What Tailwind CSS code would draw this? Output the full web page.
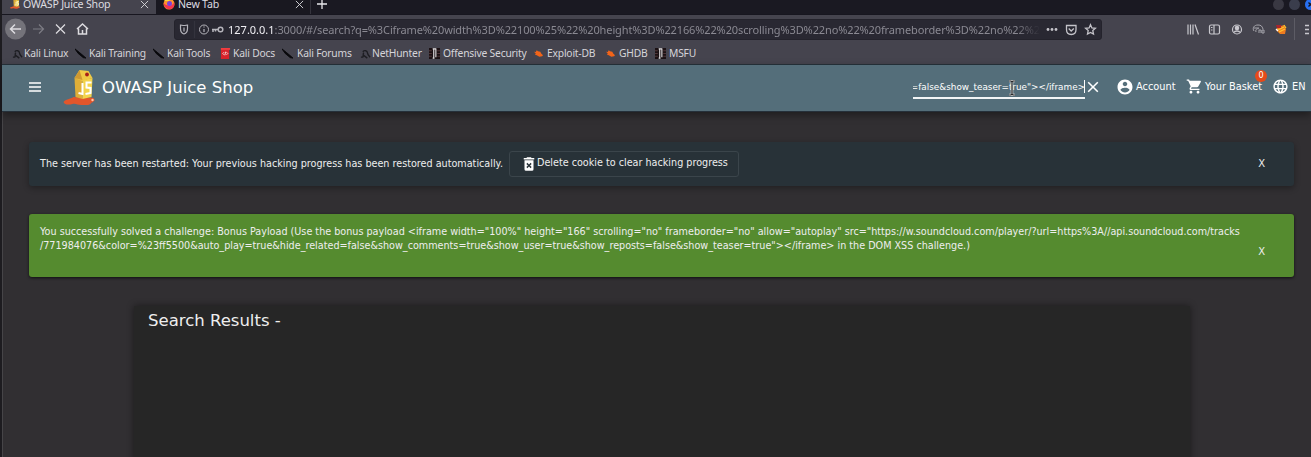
<!DOCTYPE html>
<html lang="en">
<head>
<meta charset="utf-8">
<title>OWASP Juice Shop</title>
<script src="https://cdn.jsdelivr.net/npm/@tailwindcss/browser@4"></script>
</head>
<body class="h-[457px] w-[1311px] overflow-hidden bg-[#312f32] font-['DejaVu_Sans',sans-serif] text-[#eeeeee]">
<svg class="hidden">
  <symbol id="juice" viewBox="0 0 32 36">
    <path d="M0 33c2-3 7-3 10-5l13 1c4-1 8-1 8 2 0 2-3 2-4 4-3 2-6 1-9 1-4 0-6-2-9-1-4 1-8 1-9-2z" fill="#e2562b"/>
    <path d="M11 9l8 2v19l-7-2z" fill="#dfae38"/><path d="M19 11l10-2-1 19-9 2z" fill="#f3d34b"/>
    <path d="M11 9l5-8 9 1 4 7-10 3z" fill="#f0ca45"/><path d="M11 9l5-8 3 10z" fill="#cf9931"/>
    <circle cx="23.500" cy="5.500" r="1.900" fill="#a81e16"/>
    <path d="M19 14v11l-4-1M28 13.500h-5v5l4 .5v5l-5 1" fill="none" stroke="#fff" stroke-width="2"/>
    <circle cx="29" cy="31" r="1.200" fill="#ffc9ae"/>
  </symbol>
  <symbol id="knife" viewBox="0 0 12 12"><path d="M0 1l5 4 7 6-3-.5L3.500 6z" fill="#09090c" stroke="#09090c" stroke-width="1"/></symbol>
  <symbol id="dragon" viewBox="0 0 12 12"><path d="M3 4c2-2 5-1 5 1 0 2 1 3 3 5M4 5c-1 2 0 4-1 5H1M4 8l4 3" fill="none" stroke="#1d1d22" stroke-width="1.500"/></symbol>
  <symbol id="bug" viewBox="0 0 10 8"><path d="M0 2l2 .2L3 .5l1.500 1L7 2l1 2 2 2-1 1-3 .7L3 6 1 5l1-1z" fill="#f26419"/></symbol>
  <symbol id="offsec" viewBox="0 0 12 12"><path d="M0 0h12v12H0z" fill="#1b1114"/><path d="M0 3h3M0 6h3M9 3h3M9 6h3M0 9h3M9 9h3" stroke="#55393c"/><path d="M4 1h4M5.200 1v10M7.500 1v9M4 11h2" fill="none" stroke="#e8e6e8" stroke-width="1.200"/></symbol>
  <symbol id="x" viewBox="0 0 10 10"><path d="M1 1l8 8M9 1L1 9" fill="none" stroke="currentColor"/></symbol>
</svg>
<div class="flex h-[457px] overflow-hidden">
  <div class="w-[2px] bg-[#1d1c20]"></div>
  <div class="flex w-[1309px] flex-col">
    <!-- Tab strip -->
    <div class="flex h-[14px] shrink-0 overflow-hidden bg-[#1a1922] font-['Noto_Sans',sans-serif] text-[10.600px] tracking-[-0.200px] text-[#dddce0]">
      <div class="flex h-[14px] w-[154px] bg-[#45444e] pl-[8px]">
        <svg class="mt-[-3px] h-[12px] w-[10px] shrink-0"><use href="#juice"/></svg>
        <span class="mt-[-4px] ml-[3px] w-[115px] leading-[16px] whitespace-nowrap">OWASP Juice Shop</span>
        <svg class="ml-[2px] h-[9px] w-[9px]"><use href="#x"/></svg>
      </div>
      <div class="flex h-[14px] w-[155px] border-r border-[#34333c] bg-[#191820] pl-[7px]">
        <svg class="mt-[-2px] h-[12px] w-[12px]" viewBox="0 0 12 12"><circle cx="6" cy="6" r="5.500" fill="#ff9428"/><path d="M.5 5C1 9 4 12 8 11c3-1 4-4 3-7-1 3-3 4-5 3C3 8 2 6 .5 5z" fill="#f2344e"/><circle cx="6.500" cy="5.500" r="2.500" fill="#7d41d8"/><path d="M1 3l3-3 3 3z" fill="#ffd43e"/></svg>
        <span class="mt-[-4px] ml-[3px] w-[115px] leading-[16px] whitespace-nowrap">New Tab</span>
        <svg class="ml-[2px] h-[9px] w-[9px]"><use href="#x"/></svg>
      </div>
      <svg class="mt-[-1px] ml-[6px] h-[10px] w-[10px]" viewBox="0 0 10 10"><path d="M5 0v10M0 5h10" stroke="#e8e8ec" stroke-width="1.300"/></svg>
      <div class="mt-[-1px] ml-auto flex w-[38px] shrink-0 gap-[5px] overflow-hidden">
        <i class="h-[11px] w-[11px] shrink-0 rounded-full bg-[#393842]"></i><i class="h-[11px] w-[11px] shrink-0 rounded-full bg-[#3a3d4c]"></i>
        <svg class="h-[11px] w-[11px] shrink-0" viewBox="0 0 11 11"><circle cx="5.500" cy="5.500" r="5.500" fill="#276ff0"/><path d="M3.500 3.500l4 4M7.500 3.500l-4 4" stroke="#10131c" stroke-width="1.300"/></svg>
      </div>
    </div>
    <!-- Toolbar -->
    <div class="flex h-[29px] shrink-0 items-center border-t border-[#17161f] bg-[#45444e] font-['Noto_Sans',sans-serif] text-[#dddce0]">
      <svg class="ml-[2px] h-[22px] w-[88px] shrink-0" viewBox="0 0 88 22" fill="none" stroke="#dddce0" stroke-width="1.500">
        <circle cx="11.500" cy="11" r="10.500" fill="#74737a" stroke="none"/>
        <path d="M17 11H7M11 6.500L6.500 11l4.500 4.500"/>
        <path d="M29 11h10M35 6.500l4.500 4.500-4.500 4.500" stroke="#7d7c84" stroke-width="1.200"/>
        <path d="M52 6.500l9 9M61 6.500l-9 9" stroke-width="1.200"/>
        <path d="M73 11l5.500-5 5.500 5M74.500 10.500v5.500h8v-5.500M78.500 16v-4"/>
      </svg>
      <div class="mt-px ml-[82px] flex h-[21px] w-[928px] shrink-0 items-center rounded-[3px] border border-[#24232c] bg-[#292832]">
        <svg class="ml-[3px] h-[19px] w-[50px] shrink-0" viewBox="0 0 50 19" fill="none" stroke="#b5b4bb" stroke-width="1.200">
          <path d="M6 5.500c-1.500 0-2.500-.5-3.500-.5v3.500c0 3 1.500 5 3.500 5.500 2-.5 3.500-2.500 3.500-5.500V5C8.500 5 7.500 5.500 6 5.500zM6 7.500v4"/>
          <path d="M16.500 1v17" stroke="#34333d"/>
          <circle cx="26" cy="9.500" r="4.500" stroke-width="1"/><path d="M26 9v3M26 6.500v1"/>
          <circle cx="42.500" cy="9.500" r="2.300" stroke-width="1.500"/><path d="M40 9.500h-6M35 9v3M37.500 9v2.500" stroke-width="1.500"/>
        </svg>
        <div class="w-[812px] shrink-0 overflow-hidden text-[11px] leading-[19px] tracking-[-0.120px] whitespace-nowrap text-[#8a8992] [mask-image:linear-gradient(to_right,black_97%,transparent)]"><span class="tracking-normal text-[#f0eff4]">127.0.0.1</span>:3000/#/search?q=%3Ciframe%20width%3D%22100%25%22%20height%3D%22166%22%20scrolling%3D%22no%22%20frameborder%3D%22no%22%2</div>
        <svg class="ml-[5px] h-[19px] w-[54px] shrink-0" viewBox="0 0 54 19" fill="none" stroke="#c4c3c9" stroke-width="1.300">
          <g fill="#c4c3c9" stroke="none"><circle cx="3" cy="9.500" r="1.400"/><circle cx="7" cy="9.500" r="1.400"/><circle cx="11" cy="9.500" r="1.400"/></g>
          <path d="M21.500 5.500h9.500v4c0 3-2 5-4.750 5s-4.750-2-4.750-5zM23.700 8.500l2.500 2.500 2.600-2.500"/>
          <path d="M45.500 4.700l1.400 3.200 3.500.4-2.600 2.300.7 3.500-3-1.700-3 1.700.7-3.500-2.600-2.300 3.500-.4z"/>
        </svg>
      </div>
      <svg class="ml-[85px] h-[28px] w-[122px] shrink-0" viewBox="0 0 122 28" fill="none" stroke="#c9c8ce" stroke-width="1.200">
        <path d="M1 9.500v10M3.500 9.500v10M6 9.500v10M8 9.500l3.500 10"/>
        <rect x="22.500" y="10" width="10" height="9" rx="1.500"/><path d="M27 10v9M24 12.500h1.500M24 15h1.500"/>
        <circle cx="50" cy="14.500" r="4.500"/><circle cx="50" cy="13" r="1.700" fill="#c9c8ce"/><path d="M47 17.500c1-2 5-2 6 0" stroke-width="1.600"/>
        <path d="M67 16c-2-3 0-6 4-6 3 0 4 1 5 4M67 13h5M69 17c-1-3 2-4 3-3M72 18v-3h2v3M75 15v3h2v-3z" stroke="#a5a4ab" stroke-width="1"/>
        <path d="M89 15l4 4h5l1-5-2-4-6 2z" fill="#ee7b20" stroke="none"/><path d="M89 10h5v3h-4z" fill="#a9252d" stroke="none"/><path d="M91 15l6-3M92 17l6-3M97 10l2 3" stroke="#ffc52f"/><path d="M89 14l2 2" stroke="#fff"/>
        <path d="M107.500 3v22" stroke="#5d5c65" stroke-width="1"/>
        <path d="M118 10.500h4M118 14.500h4M118 18.500h4" stroke-width="1.600"/>
      </svg>
    </div>
    <!-- Bookmarks -->
    <div class="flex h-[22px] shrink-0 border-b border-[#27323b] bg-[#45444e] pl-[10px] font-['Noto_Sans',sans-serif] text-[10.300px] leading-[21px] tracking-[-0.200px] whitespace-nowrap text-[#d5d4d9] [&_svg]:mt-[5px] [&_svg]:h-[11px] [&_svg]:w-[11px] [&_svg]:shrink-0">
      <div class="flex w-[63px] shrink-0 gap-px"><svg><use href="#dragon"/></svg>Kali Linux</div>
      <div class="flex w-[78px] shrink-0 gap-[3px]"><svg><use href="#knife"/></svg>Kali Training</div>
      <div class="flex w-[67px] shrink-0 gap-[3px]"><svg><use href="#knife"/></svg>Kali Tools</div>
      <div class="flex w-[62px] shrink-0 gap-[2px]"><svg viewBox="0 0 12 12"><path d="M1 0h9v12H1z" fill="#d8232a"/><path d="M1 0h10v2H1z" fill="#f03d40"/><path d="M4.500 4.500L3 6l1.500 1.500M7 4.500L8.500 6 7 7.500M6.200 4L5.300 8" fill="none" stroke="#fff" stroke-width=".8"/></svg>Kali Docs</div>
      <div class="flex w-[78px] shrink-0 gap-[4px]"><svg><use href="#knife"/></svg>Kali Forums</div>
      <div class="flex w-[69px] shrink-0 gap-px"><svg><use href="#dragon"/></svg>NetHunter</div>
      <div class="flex w-[104px] shrink-0 gap-[3px]"><svg><use href="#offsec"/></svg>Offensive Security</div>
      <div class="flex w-[72px] shrink-0 gap-[3px]"><svg class="p-px"><use href="#bug"/></svg>Exploit-DB</div>
      <div class="flex w-[50px] shrink-0 gap-[3px]"><svg class="p-px"><use href="#bug"/></svg>GHDB</div>
      <div class="flex shrink-0 gap-[3px]"><svg><use href="#offsec"/></svg>MSFU</div>
    </div>
    <!-- Shop header -->
    <header class="z-10 flex h-[47px] shrink-0 items-center border-b border-[#25303a] bg-[#546e7a] pb-[3px] text-white shadow-[0_3px_8px_#0006]">
      <svg class="ml-[27px] h-[10px] w-[12px] shrink-0" viewBox="0 0 12 10"><path d="M0 1h12M0 5h12M0 9h12" stroke="#fff" stroke-width="1.400"/></svg>
      <svg class="mt-px ml-[22px] h-[36px] w-[33px] shrink-0"><use href="#juice"/></svg>
      <h1 class="ml-[6px] w-[811px] shrink-0 pt-[2px] text-[16.500px] leading-[24px]">OWASP Juice Shop</h1>
      <div class="relative mt-px h-[24px] w-[172px] shrink-0 border-b-2 border-[#f2f5f6]">
        <div class="flex h-[22px] justify-end overflow-hidden text-[8.850px] leading-[24px] whitespace-nowrap"><span>=false&amp;show_teaser=true"&gt;&lt;/iframe&gt;</span></div>
        <i class="absolute top-[5px] right-0 h-[13px] w-px bg-white"></i>
        <svg class="absolute top-[5px] left-[95px] h-[16px] w-[8px]" viewBox="0 0 8 16" fill="none"><path d="M1 1h2l1 1 1-1h2M4 2v12M1 15h2l1-1 1 1h2" stroke="#dedede" stroke-width="2.500"/><path d="M1 1h2l1 1 1-1h2M4 2v12M1 15h2l1-1 1 1h2" stroke="#26292b" stroke-width="1.200"/></svg>
      </div>
      <svg class="ml-[2px] h-[12px] w-[12px] shrink-0 [stroke-width:1.300]"><use href="#x"/></svg>
      <svg class="ml-[17px] h-[18px] w-[18px] shrink-0" viewBox="0 0 24 24" fill="#fff"><path d="M12 2C6.480 2 2 6.480 2 12s4.480 10 10 10 10-4.480 10-10S17.520 2 12 2zm0 3c1.660 0 3 1.340 3 3s-1.340 3-3 3-3-1.340-3-3 1.340-3 3-3zm0 14.200c-2.500 0-4.710-1.280-6-3.220.03-1.990 4-3.080 6-3.080 1.990 0 5.970 1.090 6 3.080-1.290 1.940-3.500 3.220-6 3.220z"/></svg>
      <span class="ml-[2px] w-[50px] shrink-0 pt-[2px] text-[9.800px]">Account</span>
      <svg class="h-[17px] w-[17px] shrink-0" viewBox="0 0 24 24" fill="#fff"><path d="M7 18c-1.100 0-1.990.9-1.990 2S5.900 22 7 22s2-.9 2-2-.9-2-2-2zM1 2v2h2l3.600 7.590-1.350 2.450c-.16.280-.25.610-.25.960 0 1.100.9 2 2 2h12v-2H7.420c-.14 0-.25-.11-.25-.25l.03-.12.900-1.630h7.450c.75 0 1.410-.41 1.750-1.030l3.580-6.490A1 1 0 0020 4H5.210l-.94-2H1zm16 16c-1.100 0-1.990.9-1.990 2s.89 2 1.990 2 2-.9 2-2-.9-2-2-2z"/></svg>
      <span class="relative ml-[2px] w-[67px] shrink-0 pt-[2px] text-[9.800px] whitespace-nowrap">Your Basket<b class="absolute -top-[8px] left-[50px] h-[12px] w-[12px] rounded-full bg-[#e64a19] text-center text-[8px] leading-[12px] font-normal">0</b></span>
      <svg class="h-[17px] w-[17px] shrink-0" viewBox="0 0 24 24" fill="#fff"><path d="M11.990 2C6.470 2 2 6.480 2 12s4.470 10 9.990 10C17.520 22 22 17.520 22 12S17.520 2 11.990 2zm6.930 6h-2.950c-.32-1.250-.78-2.450-1.380-3.560 1.840.63 3.370 1.910 4.330 3.560zM12 4.040c.83 1.200 1.480 2.530 1.910 3.960h-3.820c.43-1.430 1.080-2.760 1.910-3.960zM4.260 14C4.100 13.360 4 12.690 4 12s.1-1.360.26-2h3.380c-.08.660-.14 1.320-.14 2s.06 1.340.14 2H4.260zm.82 2h2.950c.32 1.250.78 2.450 1.380 3.560A7.990 7.990 0 015.080 16zm2.950-8H5.080a7.990 7.990 0 014.330-3.560A15.650 15.650 0 008.030 8zM12 19.960c-.83-1.200-1.480-2.530-1.910-3.960h3.820c-.43 1.430-1.080 2.760-1.910 3.960zM14.340 14H9.660c-.09-.66-.16-1.320-.16-2s.07-1.350.16-2h4.680c.09.650.16 1.320.16 2s-.07 1.340-.16 2zm.25 5.560c.6-1.110 1.060-2.310 1.380-3.560h2.950a8.030 8.030 0 01-4.330 3.560zM16.360 14c.08-.66.14-1.320.14-2s-.06-1.340-.14-2h3.380c.16.640.26 1.310.26 2s-.1 1.360-.26 2h-3.380z"/></svg>
      <span class="ml-[3px] shrink-0 pt-[2px] text-[9.800px]">EN</span>
    </header>
    <!-- Page -->
    <main class="h-[345px] shrink-0 overflow-hidden border-l border-[#464548] pt-[30px] pr-[17px] pl-[26px]">
      <section class="flex h-[44px] items-center rounded-[3px] bg-[#283238] pb-px pl-[11px] text-[9.650px] shadow-[0_2px_6px_#0005]">
        <span class="w-[469px] shrink-0 pt-[2px] whitespace-nowrap">The server has been restarted: Your previous hacking progress has been restored automatically.</span>
        <button class="flex h-[26px] w-[230px] shrink-0 items-center rounded-[3px] border border-[#3b454b] pl-[10px]">
          <svg class="h-[18px] w-[18px] shrink-0" viewBox="0 0 24 24" fill="#fff"><path d="M6 19a2 2 0 002 2h8a2 2 0 002-2V7H6v12zm2.460-7.120l1.410-1.410L12 12.590l2.120-2.120 1.410 1.410L13.410 14l2.120 2.120-1.410 1.410L12 15.410l-2.120 2.120-1.410-1.410L10.590 14zM15.500 4l-1-1h-5l-1 1H5v2h14V4z" /></svg>
          <span class="ml-[-1px] whitespace-nowrap">Delete cookie to clear hacking progress</span>
        </button>
        <span class="mr-[29px] ml-auto text-[10px]">X</span>
      </section>
      <section class="mt-[28px] flex h-[63px] rounded-[3px] bg-[#558b2f] pt-[11px] pl-[11px] text-[9.630px] leading-[14px] shadow-[0_1px_3px_#000a]">
        <p class="whitespace-nowrap">You successfully solved a challenge: Bonus Payload (Use the bonus payload &lt;iframe width="100%" height="166" scrolling="no" frameborder="no" allow="autoplay" src="https://w.soundcloud.com/player/?url=https%3A//api.soundcloud.com/tracks<br>/771984076&amp;color=%23ff5500&amp;auto_play=true&amp;hide_related=false&amp;show_comments=true&amp;show_user=true&amp;show_reposts=false&amp;show_teaser=true"&gt;&lt;/iframe&gt; in the DOM XSS challenge.)</p>
        <span class="mt-[20px] mr-[29px] ml-auto text-[10px]">X</span>
      </section>
      <section class="mt-[29px] ml-[105px] h-[155px] w-[1056px] bg-[#262626] pt-[3px] pl-[14px] shadow-[0_0_7px_#0007]">
        <h2 class="text-[16.500px] leading-[24px]">Search Results -</h2>
      </section>
    </main>
  </div>
</div>
</body>
</html>
